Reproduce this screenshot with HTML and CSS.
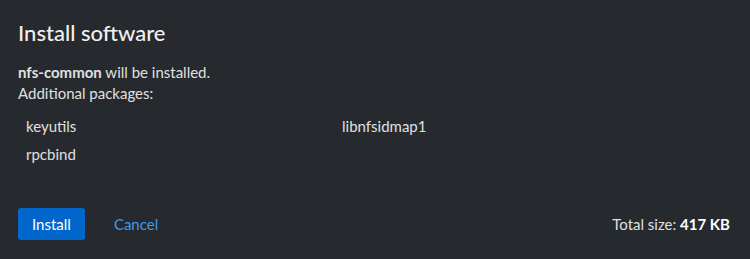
FILE: index.html
```html
<!DOCTYPE html>
<html lang="en">
<head>
<meta charset="utf-8">
<link rel="stylesheet" href="styles.css">
</head>
<body>
<div class="modal">
  <h1 class="title">Install software</h1>
  <div class="body">
    <p class="line"><strong>nfs-common</strong> will be installed.</p>
    <p class="line">Additional packages:</p>
    <ul class="packages">
      <li>keyutils</li>
      <li>libnfsidmap1</li>
      <li>rpcbind</li>
    </ul>
  </div>
  <div class="footer">
    <button class="btn-primary">Install</button>
    <a class="btn-link">Cancel</a>
    <span class="total">Total size: <strong>417 KB</strong></span>
  </div>
</div>
</body>
</html>
```
FILE: styles.css
```css
html, body {
  margin: 0;
  padding: 0;
  background: #26292d;
}
body {
  width: 750px;
  height: 259px;
  overflow: hidden;
  font-family: "Lato", "Liberation Sans", sans-serif;
  color: #e0e0e0;
}
.modal {
  padding: 18px 20px 0 18px;
}
.title {
  margin: 0;
  font-size: 22px;
  font-weight: 500;
  line-height: 30px;
  color: #f0f0f0;
}
.body {
  margin-top: 14px;
  font-size: 15px;
}
.line {
  margin: 0;
  line-height: 21px;
}
.line strong {
  font-weight: 700;
}
.packages {
  list-style: none;
  margin: 12px 0 0 8px;
  padding: 0;
  display: grid;
  grid-template-columns: 316px 1fr;
  row-gap: 7px;
  line-height: 21px;
}
.footer {
  margin-top: 43px;
  display: flex;
  align-items: center;
  font-size: 15px;
}
.btn-primary {
  background: #0066cc;
  color: #fff;
  border: 0;
  border-radius: 3px;
  font: inherit;
  padding: 0 14px;
  height: 32px;
  line-height: 32px;
}
.btn-link {
  margin-left: 29px;
  color: #3d9be9;
}
.total {
  margin-left: auto;
  color: #e0e0e0;
}
.total strong {
  font-weight: 700;
  color: #fff;
}
```
